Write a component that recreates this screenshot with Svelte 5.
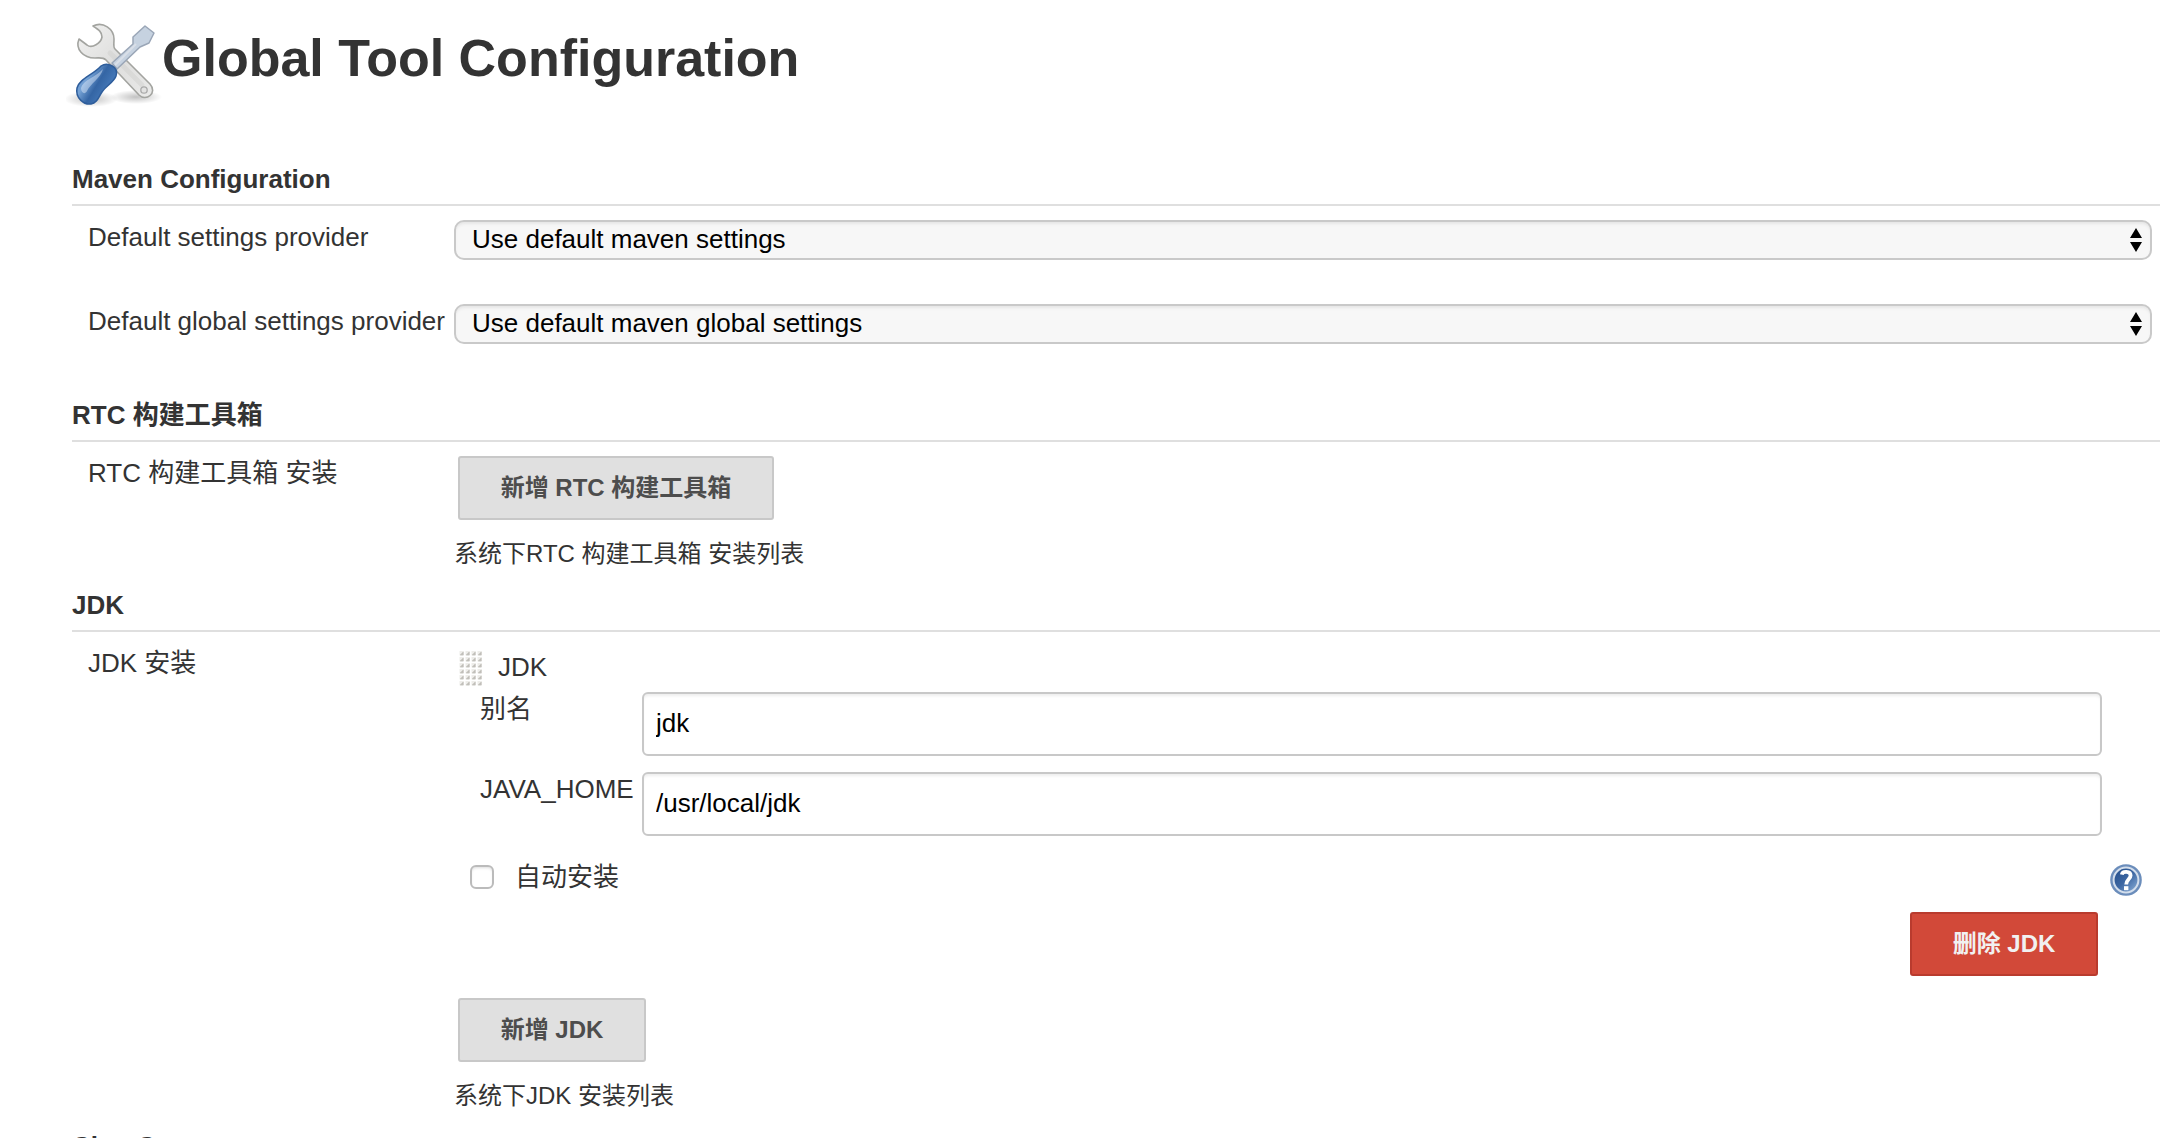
<script>
  const dots = [];
  for (let r = 0; r < 6; r++) for (let c = 0; c < 4; c++) dots.push([c * 6, r * 6]);
</script>

{#snippet arrows()}
  <svg class="arrows" width="12" height="24" viewBox="0 0 12 24"><path d="M6 0l6 10H0zM6 24l6-10H0z" /></svg>
{/snippet}

<main>
  <header>
    <svg class="tools" width="96" height="96" viewBox="0 0 96 96">
      <defs>
        <radialGradient id="shade"><stop offset="0" stop-color="#000" stop-opacity=".24" /><stop offset="1" stop-color="#000" stop-opacity="0" /></radialGradient>
        <linearGradient id="steel" x1="0" y1="0" x2="1" y2="1"><stop offset="0" stop-color="#f2f2f1" /><stop offset=".5" stop-color="#dededd" /><stop offset="1" stop-color="#eaeae9" /></linearGradient>
        <linearGradient id="handle" x1="0" y1="0" x2="1" y2=".6"><stop offset="0" stop-color="#4c80bf" /><stop offset=".35" stop-color="#76a3d6" /><stop offset=".6" stop-color="#3465a4" /><stop offset="1" stop-color="#4d82c2" /></linearGradient>
      </defs>
      <ellipse cx="25" cy="83" rx="27" ry="8" fill="url(#shade)" />
      <ellipse cx="70" cy="81" rx="26" ry="7" fill="url(#shade)" />
      <path d="M27 10C37 5 48 13 48 23C48 29 47 31 49 33L84 68C92 77 80 86 73 79L40 44C37 41 34 42 29 42C17 42 9 33 13 23L21 29C26 33 35 27 36 21C36 16 33 14 27 10z" fill="url(#steel)" stroke="#a3a4a0" stroke-width="1.6" stroke-linejoin="round" />
      <path d="M44 37L76 69" stroke="#cfcfcd" stroke-width="5" stroke-linecap="round" opacity=".45" fill="none" />
      <circle cx="78" cy="74" r="3.2" fill="#e2e2e1" stroke="#aaa" stroke-width="1.3" />
      <path d="M46 47L67 28V21L79 10L88 17L83 27L74 31L51 53z" fill="#c6d2e0" stroke="#9aa6b7" stroke-width="1.5" stroke-linejoin="round" />
      <path d="M49 49L70 28" fill="none" stroke="#d9dfe8" stroke-width="2" />
      <path d="M35 50C41 46 53 50 50 60C48 66 40 70 36 76C32 82 31 87 25 88C18 89 9 82 11 72C13 63 27 59 35 50z" fill="url(#handle)" stroke="#2e5d9b" stroke-width="1.5" />
      <path d="M37 53C30 61 17 64 15 72C15 77 19 79 21 75C24 68 35 62 37 53z" fill="#d7e6f7" opacity=".5" />
    </svg>
    <h1>Global Tool Configuration</h1>
  </header>

  <section class="maven">
    <h2>Maven Configuration</h2>
    <div class="row"><span class="label">Default settings provider</span><div class="select"><span>Use default maven settings</span>{@render arrows()}</div></div>
    <div class="row second"><span class="label">Default global settings provider</span><div class="select"><span>Use default maven global settings</span>{@render arrows()}</div></div>
  </section>

  <section class="rtc">
    <h2>RTC 构建工具箱</h2>
    <div class="row">
      <span class="label">RTC 构建工具箱 安装</span>
      <div class="content">
        <button class="wide">新增 RTC 构建工具箱</button>
        <p>系统下RTC 构建工具箱 安装列表</p>
      </div>
    </div>
  </section>

  <section class="jdk">
    <h2>JDK</h2>
    <div class="row">
      <span class="label">JDK 安装</span>
      <div class="content">
        <div class="tool">
          <svg width="24" height="36" viewBox="0 0 24 36">
            {#each dots as [x, y]}
              <rect x={x + 0.5} y={y + 1} width="4.5" height="4.5" fill="#eeedea" />
              <path d="M{x + 4.2} {y + 2}v3h-3z" fill="#b9b8b2" stroke="#c9c8c3" stroke-width=".8" />
            {/each}
          </svg>
          <span>JDK</span>
        </div>
        <div class="field"><label for="name">别名</label><input id="name" value="jdk" /></div>
        <div class="field"><label for="home">JAVA_HOME</label><input id="home" value="/usr/local/jdk" /></div>
        <div class="auto">
          <span class="check"></span><span>自动安装</span>
          <svg class="help" width="32" height="32" viewBox="0 0 32 32">
            <defs><linearGradient id="ball" x1="0" y1="0" x2="1" y2="1"><stop offset="0" stop-color="#204a87" /><stop offset=".5" stop-color="#3e68a3" /><stop offset="1" stop-color="#8fb3dc" /></linearGradient></defs>
            <circle cx="16" cy="16" r="15.8" fill="#6b8dbb" />
            <circle cx="16" cy="16" r="12.4" fill="url(#ball)" stroke="#d3deec" stroke-width="2" />
            <path d="M11.8 10.6C12.5 6.8 20.6 6.8 20.6 11.6C20.6 15.2 16.2 15.6 16.2 20.4" fill="none" stroke="#fff" stroke-width="3.8" />
            <rect x="14" y="22.2" width="4.4" height="4" fill="#fff" />
          </svg>
        </div>
        <button class="delete">删除 JDK</button>
        <button class="add">新增 JDK</button>
        <p>系统下JDK 安装列表</p>
      </div>
    </div>
  </section>
  <section class="next"><h2>ClearCase</h2></section>
</main>

<style>
  :global(body) { background: #fff; overflow: hidden; }
  main { box-sizing: border-box; width: 2172px; height: 1138px; overflow: hidden; padding: 0 12px 0 72px; color: #333; font: 26px/30px "Liberation Sans", "Noto Sans CJK SC", sans-serif; }
  header { display: flex; height: 162px; margin-left: -6px; padding-top: 16px; box-sizing: border-box; }
  h1 { margin: 12px 0 0; font-size: 52px; line-height: 60px; white-space: nowrap; }
  h2 { box-sizing: border-box; height: 44px; margin: 0; padding-top: 2px; border-bottom: 2px solid #dfdfdf; font-size: 26px; line-height: 30px; white-space: nowrap; }
  section { overflow: hidden; }
  .maven { height: 236px; }
  .rtc { height: 190px; }
  .jdk { height: 541px; }
  .row { display: grid; grid-template-columns: 366px 1fr; padding: 14px 0 0 16px; }
  .row.second { padding-top: 44px; }
  .label { white-space: nowrap; margin-top: 2px; height: 30px; }
  .content { display: flex; flex-direction: column; }
  .select { box-sizing: border-box; display: flex; align-items: center; justify-content: space-between; height: 40px; margin-right: 8px; padding: 0 8px 2px 16px; border: 2px solid #c9c9c9; border-radius: 10px; background: #f7f7f7; box-shadow: inset 0 3px 3px -1px #e6e6e6; color: #000; }
  .arrows { margin-top: 2px; }
  button { box-sizing: border-box; height: 64px; margin: 0 0 0 4px; padding: 0; border: 2px solid #c8c8c8; border-radius: 3px; background: #e0e0e0; color: #4d4d4d; font: bold 24px/28px "Liberation Sans", "Noto Sans CJK SC", sans-serif; white-space: nowrap; }
  .wide { width: 316px; }
  .add { width: 188px; margin-top: 22px; }
  .delete { width: 188px; align-self: flex-end; margin: 16px 62px 0 0; background: #d24939; border-color: #b93b2e; color: #f1f1f1; }
  p { margin: 20px 0 0; font-size: 24px; line-height: 28px; white-space: nowrap; }
  .tool { display: flex; height: 46px; padding-left: 5px; }
  .tool svg { margin-top: 4px; }
  .tool span { margin: 6px 0 0 15px; }
  .field { display: grid; grid-template-columns: 162px 1460px; height: 80px; padding-left: 26px; }
  input { box-sizing: border-box; height: 64px; margin: 0; padding: 0 12px 2px; border: 2px solid #c8c8c8; border-radius: 6px; background: #fff; box-shadow: inset 0 3px 3px -1px #eee; color: #000; font: 26px "Liberation Sans", sans-serif; }
  label { margin-top: 2px; white-space: nowrap; }
  .auto { box-sizing: border-box; display: flex; align-items: center; height: 44px; padding: 6px 0 0 16px; margin-right: 18px; }
  .check { box-sizing: border-box; width: 24px; height: 24px; margin-right: 21px; border: 2px solid #bbb; border-radius: 6px; box-shadow: inset 0 2px 3px -1px #ddd; }
  .help { margin: 6px 0 0 auto; }
</style>
